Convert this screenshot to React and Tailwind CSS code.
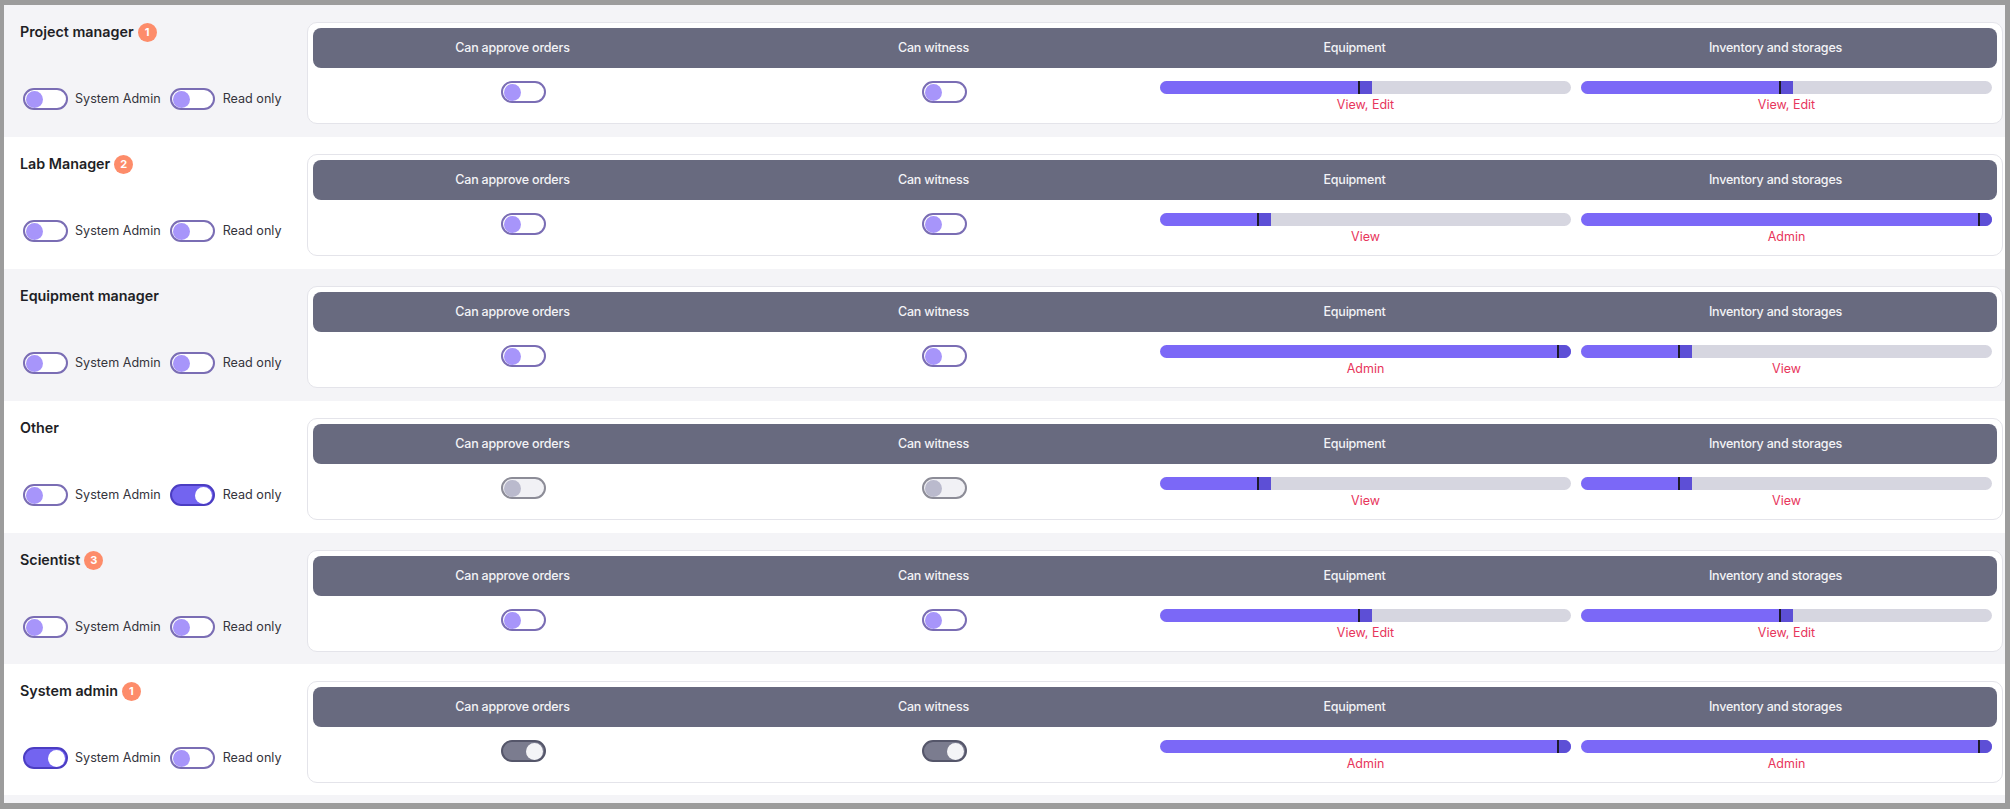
import React from 'react';

const roles = [
    { name: 'Project manager', badge: 1, sysAdmin: false, readOnly: false, perm: 'normal', equip: 'edit', inv: 'edit', h: 'h-[132px]' },
    { name: 'Lab Manager', badge: 2, sysAdmin: false, readOnly: false, perm: 'normal', equip: 'view', inv: 'admin', h: 'h-[132px]' },
    { name: 'Equipment manager', badge: null, sysAdmin: false, readOnly: false, perm: 'normal', equip: 'admin', inv: 'view', h: 'h-[132px]' },
    { name: 'Other', badge: null, sysAdmin: false, readOnly: true, perm: 'disabled', equip: 'view', inv: 'view', h: 'h-[132px]' },
    { name: 'Scientist', badge: 3, sysAdmin: false, readOnly: false, perm: 'normal', equip: 'edit', inv: 'edit', h: 'h-[131px]' },
    { name: 'System admin', badge: 1, sysAdmin: true, readOnly: false, perm: 'locked', equip: 'admin', inv: 'admin', h: 'h-[131px]' },
];

const levels = {
    view: { pct: 27, label: 'View' },
    edit: { pct: 51.7, label: 'View, Edit' },
    admin: { pct: 100, label: 'Admin' },
};

const Toggle = ({ variant = 'off' }) => {
    const track = {
        off: 'bg-white border-[#7a6db4]',
        on: 'bg-[#7364f0] border-[#4b3dc2]',
        disabled: 'bg-[#f1f1f5] border-[#8c8c97]',
        locked: 'bg-[#7b7c8f] border-[#55566a]',
    }[variant];
    const knob = {
        off: 'bg-[#a795fa] left-[1px]',
        on: 'bg-white right-[1px]',
        disabled: 'bg-[#babacd] left-[1px]',
        locked: 'bg-[#f4f4f7] right-[1px]',
    }[variant];

    return (
        <div className={`relative w-[45px] h-[22px] shrink-0 rounded-full border-2 ${track}`}>
            <div className={`absolute top-[0.5px] w-[17px] h-[17px] rounded-full ${knob}`} />
        </div>
    );
};

const PermBar = ({ level }) => {
    const { pct, label } = levels[level];
    return (
        <div className="flex flex-col items-center px-[5px]">
            <div className="w-full h-[13px] rounded-full bg-[#d6d6e0] overflow-hidden">
                <div className="h-full bg-[#7b68f7] flex justify-end" style={{ width: `${pct}%` }}>
                    <div className="w-[14px] h-full bg-[#5d4fd6] border-l-2 border-[#1d1b2b]" />
                </div>
            </div>
            <span className="mt-[3px] text-[12.5px] leading-[16px] text-[#e7365c]">{label}</span>
        </div>
    );
};

const headers = ['Can approve orders', 'Can witness', 'Equipment', 'Inventory and storages'];

const RoleRow = ({ role, shaded }) => {
    const permToggle = role.perm === 'normal' ? 'off' : role.perm;
    return (
        <div className={`flex items-start pt-[17px] ${role.h} ${shaded ? 'bg-[#f4f4f7]' : 'bg-white'}`}>
            <div className="w-[303px] shrink-0 pl-[16px] flex flex-col">
                <div className="flex items-center h-[20px]">
                    <span className="text-[14.3px] font-semibold text-[#1f1f26]">{role.name}</span>
                    {role.badge && (
                        <span className="ml-[4px] w-[19px] h-[19px] rounded-full bg-[#fd8c6a] text-white text-[11px] font-bold flex items-center justify-center">
                            {role.badge}
                        </span>
                    )}
                </div>
                <div className="mt-[46px] ml-[3px] flex items-center">
                    <Toggle variant={role.sysAdmin ? 'on' : 'off'} />
                    <span className="ml-[7px] text-[12.6px] text-[#34343c]">System Admin</span>
                    <div className="ml-[9px]">
                        <Toggle variant={role.readOnly ? 'on' : 'off'} />
                    </div>
                    <span className="ml-[8px] text-[12.6px] text-[#34343c]">Read only</span>
                </div>
            </div>
            <div className="flex-1 mr-[2px] bg-white border border-[#e4e4ea] rounded-[10px] p-[5px]">
                <div className="grid grid-cols-4 h-[40px] bg-[#686a7f] rounded-[8px]">
                    {headers.map((h) => (
                        <div key={h} className="flex items-center justify-center pr-[22px] text-[12.5px] font-medium text-[#f3f3f6] tracking-[-0.2px]">
                            {h}
                        </div>
                    ))}
                </div>
                <div className="grid grid-cols-4 h-[50px] pt-[13px]">
                    <div className="flex justify-center">
                        <Toggle variant={permToggle} />
                    </div>
                    <div className="flex justify-center">
                        <Toggle variant={permToggle} />
                    </div>
                    <PermBar level={role.equip} />
                    <PermBar level={role.inv} />
                </div>
            </div>
        </div>
    );
};

const App = () => {
    return (
        <div className="w-[2010px] h-[809px] bg-[#f4f4f7] border-[#9c9c9c] border-t-[5px] border-l-4 border-r-[5px] border-b-[6px] pb-[8px] overflow-hidden" style={{ fontFamily: 'Inter, "Noto Sans", sans-serif' }}>
            {roles.map((role, i) => (
                <RoleRow key={role.name} role={role} shaded={i % 2 === 0} />
            ))}
        </div>
    );
};

export default App;
